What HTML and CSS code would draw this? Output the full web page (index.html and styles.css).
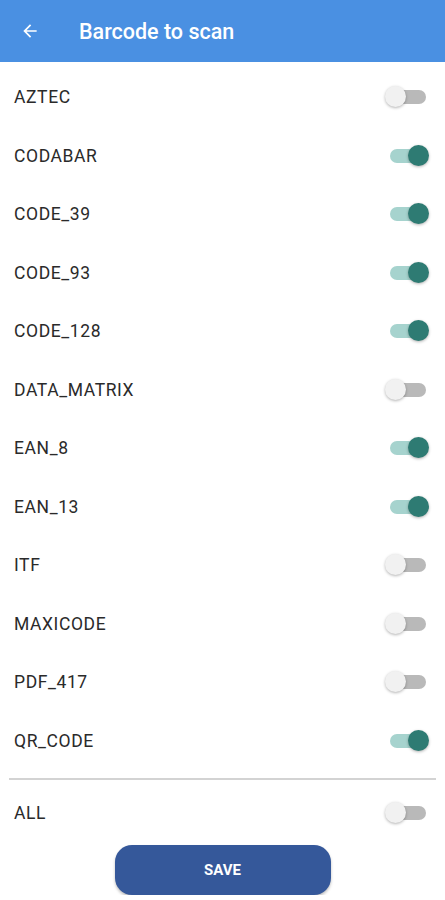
FILE: index.html
```html
<!DOCTYPE html>
<html lang="en">
<head>
<meta charset="UTF-8">
<meta name="viewport" content="width=device-width, initial-scale=1.0">
<title>Barcode to scan</title>
<link rel="stylesheet" href="styles.css">
</head>
<body>
<header class="toolbar">
  <button class="back" type="button" aria-label="Back">
    <svg width="20" height="20" viewBox="0 0 24 24"><path d="M20 11H7.83l5.59-5.59L12 4l-8 8 8 8 1.41-1.41L7.83 13H20v-2z" fill="#fff"/></svg>
  </button>
  <h1 class="title">Barcode to scan</h1>
</header>

<ul class="list">
  <li class="row"><span class="label">AZTEC</span><span class="switch"></span></li>
  <li class="row"><span class="label">CODABAR</span><span class="switch on"></span></li>
  <li class="row"><span class="label">CODE_39</span><span class="switch on"></span></li>
  <li class="row"><span class="label">CODE_93</span><span class="switch on"></span></li>
  <li class="row"><span class="label">CODE_128</span><span class="switch on"></span></li>
  <li class="row"><span class="label">DATA_MATRIX</span><span class="switch"></span></li>
  <li class="row"><span class="label">EAN_8</span><span class="switch on"></span></li>
  <li class="row"><span class="label">EAN_13</span><span class="switch on"></span></li>
  <li class="row"><span class="label">ITF</span><span class="switch"></span></li>
  <li class="row"><span class="label">MAXICODE</span><span class="switch"></span></li>
  <li class="row"><span class="label">PDF_417</span><span class="switch"></span></li>
  <li class="row"><span class="label">QR_CODE</span><span class="switch on"></span></li>
</ul>

<hr class="divider">

<div class="row all"><span class="label">ALL</span><span class="switch"></span></div>

<div class="actions">
  <button class="save" type="button">SAVE</button>
</div>
</body>
</html>
```

FILE: styles.css
```css
body {
  margin: 0;
  font-family: Roboto, "Liberation Sans", sans-serif;
  background: #fff;
  color: #222;
}

.toolbar {
  height: 62px;
  background-color: #4a90e2;
  display: flex;
  align-items: center;
}

.back {
  background: none;
  border: none;
  padding: 0;
  margin-left: 20px;
  width: 20px;
  height: 20px;
  display: flex;
}

.title {
  margin: 0 0 0 39px;
  color: #fff;
  font-size: 21.5px;
  font-weight: 500;
}

.list {
  list-style: none;
  margin: 0;
  padding: 6px 0 0;
}

.row {
  height: 58.5px;
  display: flex;
  align-items: center;
  justify-content: space-between;
  padding: 0 19px 0 14px;
}

.label {
  font-size: 17.5px;
  letter-spacing: 0.6px;
  color: #2a2a2a;
}

/* switch: track + thumb */
.switch {
  position: relative;
  width: 36px;
  height: 14px;
  border-radius: 7px;
  background-color: #b9b9b9;
}

.switch::after {
  content: "";
  position: absolute;
  top: -4px;
  left: -5px;
  width: 21px;
  height: 21px;
  border-radius: 50%;
  background-color: #f1f1f1;
  box-shadow: 0 1px 3px rgba(0, 0, 0, 0.3);
}

.switch.on {
  background-color: #a6d3ce;
}

.switch.on::after {
  left: 18px;
  background-color: #2e7b73;
}

.divider {
  border: none;
  border-top: 2px solid #d3d3d3;
  margin: 8px 9px 4px;
}

.actions {
  display: flex;
  justify-content: center;
  padding-top: 2px;
}

.save {
  width: 216px;
  height: 50px;
  border: none;
  border-radius: 17px;
  background-color: #35589a;
  color: #fff;
  font-family: Roboto, "Liberation Sans", sans-serif;
  font-size: 15px;
  font-weight: bold;
  box-shadow: 0 2px 3px rgba(0, 0, 0, 0.25);
}
```
